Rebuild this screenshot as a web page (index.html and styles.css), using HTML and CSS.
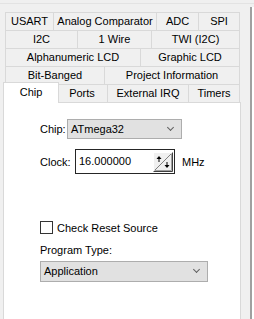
FILE: index.html
```html
<!DOCTYPE html>
<html lang="en">
<head>
    <meta charset="UTF-8">
    <title>Chip Settings</title>
    <link rel="stylesheet" href="styles.css">
</head>
<body>
    <div class="window">
        <div class="tabctl">
            <div class="tabrow">
                <div class="tab first" style="width: 49px">USART</div>
                <div class="tab" style="width: 103px">Analog Comparator</div>
                <div class="tab" style="width: 42px">ADC</div>
                <div class="tab" style="width: 41px">SPI</div>
            </div>
            <div class="tabrow">
                <div class="tab first" style="width: 73px">I2C</div>
                <div class="tab" style="width: 74px">1 Wire</div>
                <div class="tab" style="width: 88px">TWI (I2C)</div>
            </div>
            <div class="tabrow">
                <div class="tab first" style="width: 136px">Alphanumeric LCD</div>
                <div class="tab" style="width: 99px">Graphic LCD</div>
            </div>
            <div class="tabrow">
                <div class="tab first" style="width: 100px">Bit-Banged</div>
                <div class="tab" style="width: 135px">Project Information</div>
            </div>
            <div class="tabrow">
                <div class="tab first sel" style="width: 56px">Chip</div>
                <div class="tab" style="width: 51px">Ports</div>
                <div class="tab" style="width: 81px">External IRQ</div>
                <div class="tab" style="width: 51px">Timers</div>
            </div>

            <div class="panel">
                <div class="field">
                    <span class="label chip-label">Chip:</span>
                    <div class="combo chip-combo">
                        <span>ATmega32</span>
                        <span class="chev"></span>
                    </div>
                </div>
                <div class="field clock">
                    <span class="label clock-label">Clock:</span>
                    <div class="numbox">
                        <span>16.000000</span>
                        <svg class="spin" width="20" height="20" viewBox="0 0 20 20">
                            <rect x="0.5" y="0.5" width="19" height="19" fill="#f0f0f0" stroke="#fff"/>
                            <path d="M19.5 0.5 V19.5 H0.5" fill="none" stroke="#404040"/>
                            <path d="M18.5 1.5 V18.5 H1.5" fill="none" stroke="#a0a0a0"/>
                            <path d="M2 18 L18 2" stroke="#808080" stroke-width="1"/>
                            <path d="M6 4 L3.5 7 H8.5 Z" fill="#000"/>
                            <rect x="5.5" y="6" width="1" height="4" fill="#000"/>
                            <path d="M14 16 L11.5 13 H16.5 Z" fill="#000"/>
                            <rect x="13.5" y="10" width="1" height="4" fill="#000"/>
                        </svg>
                    </div>
                    <span class="unit">MHz</span>
                </div>
                <label class="check">
                    <span class="box"></span>
                    <span>Check Reset Source</span>
                </label>
                <div class="prog-label">Program Type:</div>
                <div class="combo prog-combo">
                    <span>Application</span>
                    <span class="chev"></span>
                </div>
            </div>
        </div>
        <div class="edge"></div>
    </div>
</body>
</html>
```

FILE: styles.css
```css
*{
    margin: 0; padding: 0;
    box-sizing: border-box;
}
body{
    width: 254px;
    height: 319px;
    overflow: hidden;
    background: #f0f0f0;
    font-family: "Liberation Sans", Arial, sans-serif;
    font-size: 11px;
    color: #000;
}
.window{
    display: flex;
    height: 316px;
    margin-top: 3px;
    border-top: 1px solid #e3e3e3;
}
.tabctl{
    width: 242px;
    padding: 8px 0 0 3px;
    display: flex;
    flex-direction: column;
}
.tabrow{
    display: flex;
    height: 18px;
    margin: 0 2px;
}
.tab{
    height: 18px;
    display: flex;
    align-items: center;
    justify-content: center;
    border-top: 1px solid #d9d9d9;
    border-right: 1px solid #d9d9d9;
    background: #f0f0f0;
    white-space: nowrap;
    padding-bottom: 1px;
}
.tab.first{
    border-left: 1px solid #d9d9d9;
}
.tab.sel{
    position: relative;
    z-index: 1;
    height: 21px;
    margin: -2px -2px -1px -2px;
    background: #fff;
    padding-bottom: 3px;
}
.panel{
    flex: 1;
    margin-right: 1px;
    background: #fff;
    border: 1px solid #d9d9d9;
    border-bottom: none;
    padding: 16px 0 0 36px;
}
.field{
    display: flex;
    align-items: center;
}
.label{
    display: block;
}
.chip-label{
    width: 27px;
}
.clock-label{
    width: 35px;
}
.combo{
    display: flex;
    align-items: center;
    justify-content: space-between;
    background: #e1e1e1;
    border: 1px solid #adadad;
    padding: 0 8px 1px 3px;
}
.chip-combo{
    width: 115px;
    height: 20px;
}
.chev{
    width: 5px;
    height: 5px;
    border-right: 1px solid #606060;
    border-bottom: 1px solid #606060;
    transform: rotate(45deg);
    margin-top: -3px;
}
.clock{
    margin-top: 10px;
}
.numbox{
    width: 100px;
    height: 25px;
    border: 1px solid #262626;
    display: flex;
    align-items: center;
    justify-content: space-between;
    padding: 0 1px 0 3px;
}
.numbox span{
    padding-bottom: 1px;
}
.spin{
    display: block;
}
.unit{
    margin-left: 7px;
}
.check{
    display: flex;
    align-items: center;
    gap: 4px;
    margin-top: 47px;
    height: 13px;
}
.box{
    width: 13px;
    height: 13px;
    border: 1px solid #333;
    background: #fff;
}
.prog-label{
    margin-top: 10px;
    line-height: 13px;
}
.prog-combo{
    width: 168px;
    height: 21px;
    margin-top: 4px;
}
.edge{
    width: 4px;
    margin: 3px 0 0 8px;
    border-left: 2px solid #a0a0a0;
    background: #fff;
}
```
